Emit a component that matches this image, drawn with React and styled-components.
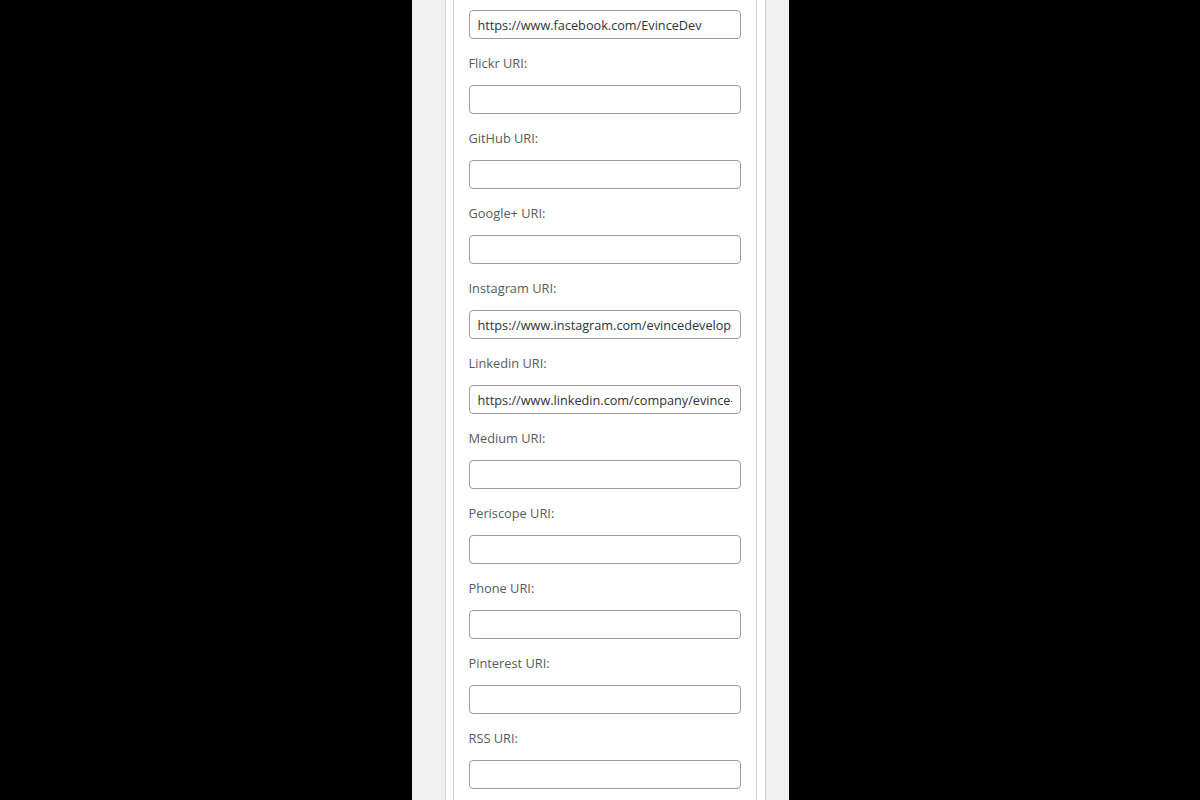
import React from "react";
import styled, { createGlobalStyle } from "styled-components";

const GlobalStyle = createGlobalStyle`
  html, body {
    margin: 0;
    padding: 0;
    height: 100%;
    background: #000000;
    overflow: hidden;
  }
  #root {
    height: 100%;
  }
`;

const Stage = styled.div`
  height: 100vh;
  display: flex;
  justify-content: center;
  background: #000000;
`;

const Panel = styled.div`
  width: 377px;
  height: 100%;
  background: #f0f0f1;
  padding: 0 23px 0 33px;
  box-sizing: border-box;
  overflow: hidden;
`;

const Card = styled.div`
  height: 100%;
  box-sizing: border-box;
  background: #ffffff;
  border-left: 1px solid #d4d4d6;
  border-right: 1px solid #d4d4d6;
  padding: 0 8px 0 7px;
`;

const Inner = styled.div`
  height: 100%;
  box-sizing: border-box;
  border-left: 1px solid #cfd0d2;
  border-right: 1px solid #cfd0d2;
  padding: 10px 15px 0;
  display: flex;
  flex-direction: column;
  gap: 15px;
`;

const Field = styled.div`
  display: flex;
  flex-direction: column;
  gap: 12px;
`;

const Label = styled.label`
  font-family: "Open Sans", "Noto Sans", sans-serif;
  font-size: 12.8px;
  line-height: 19px;
  color: #555b61;
`;

const Input = styled.input`
  box-sizing: border-box;
  width: 272px;
  height: 29px;
  margin: 0;
  padding: 0 8px;
  border: 1px solid #9a9da1;
  border-radius: 4px;
  background: #ffffff;
  font-family: "Open Sans", "Noto Sans", sans-serif;
  font-size: 12.7px;
  color: #2c3338;
  outline: none;
`;

// the list is scrolled: the Facebook label sits above the top edge
const fields = [
  { id: "facebook", label: null, value: "https://www.facebook.com/EvinceDev" },
  { id: "flickr", label: "Flickr URI:", value: "" },
  { id: "github", label: "GitHub URI:", value: "" },
  { id: "google", label: "Google+ URI:", value: "" },
  { id: "instagram", label: "Instagram URI:", value: "https://www.instagram.com/evincedevelopment" },
  { id: "linkedin", label: "Linkedin URI:", value: "https://www.linkedin.com/company/evince-development" },
  { id: "medium", label: "Medium URI:", value: "" },
  { id: "periscope", label: "Periscope URI:", value: "" },
  { id: "phone", label: "Phone URI:", value: "" },
  { id: "pinterest", label: "Pinterest URI:", value: "" },
  { id: "rss", label: "RSS URI:", value: "" },
];

function App() {
  return (
    <>
      <GlobalStyle />
      <Stage>
        <Panel>
          <Card>
            <Inner>
              {fields.map((f) => (
                <Field key={f.id}>
                  {f.label && <Label htmlFor={f.id}>{f.label}</Label>}
                  <Input id={f.id} type="text" defaultValue={f.value} readOnly />
                </Field>
              ))}
            </Inner>
          </Card>
        </Panel>
      </Stage>
    </>
  );
}

export default App;
